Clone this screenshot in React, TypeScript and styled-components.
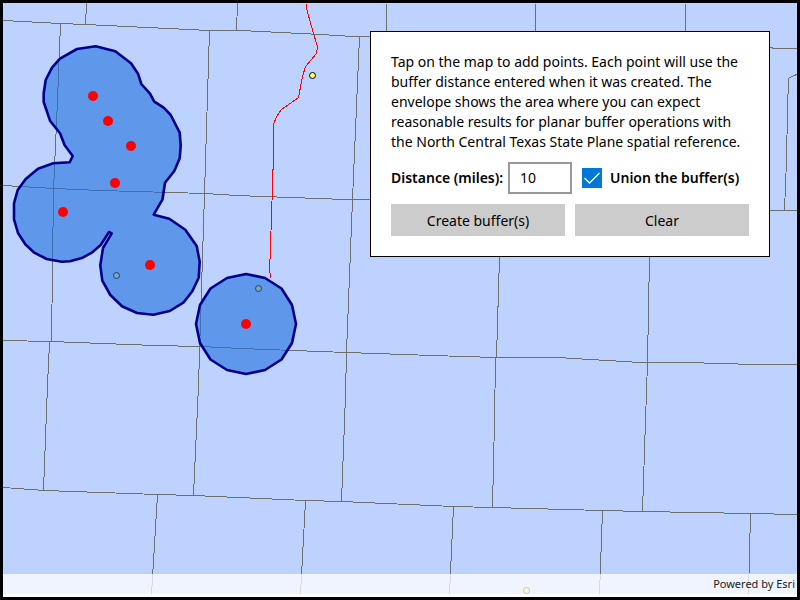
import React, { useState } from "react";
import styled, { createGlobalStyle } from "styled-components";

const GlobalStyle = createGlobalStyle`
  *, *::before, *::after { box-sizing: border-box; }
  body {
    margin: 0;
    font-family: "Noto Sans", "Open Sans", sans-serif;
    font-size: 14px;
    line-height: 20px;
    color: #000;
  }
`;

const Frame = styled.main`
  position: relative;
  display: flex;
  flex-direction: column;
  justify-content: space-between;
  min-height: 100vh;
  border: 3px solid #000;
  background: #bed2ff;
`;

const MapCanvas = styled.svg`
  position: absolute;
  inset: 0;
  width: 100%;
  height: 100%;
`;

const Panel = styled.form`
  position: relative;
  align-self: flex-end;
  display: flex;
  flex-direction: column;
  gap: 10px;
  width: 400px;
  max-width: 100%;
  margin: 28px 27px 28px 0;
  padding: 20px;
  border: 1px solid #000;
  background: #fff;
`;

const Help = styled.p`
  margin: 0;
`;

const Options = styled.div`
  display: flex;
  align-items: center;
  gap: 10px;
`;

const DistanceLabel = styled.label`
  display: flex;
  align-items: center;
  justify-content: space-between;
  width: 181px;
  font-weight: 600;
  white-space: nowrap;
`;

const DistanceInput = styled.input`
  width: 64px;
  height: 32px;
  padding: 0 10px 2px;
  border: 2px solid #999;
  border-radius: 0;
  background: #fff;
  font: inherit;
  font-weight: 400;
  color: #000;
`;

const UnionLabel = styled.label`
  display: flex;
  align-items: center;
  gap: 8px;
  font-weight: 600;
  white-space: nowrap;
`;

const TickBox = styled.span`
  position: relative;
  display: block;
  width: 20px;
  height: 20px;
`;

const Tick = styled.input`
  appearance: none;
  display: block;
  width: 20px;
  height: 20px;
  margin: 0;
  border: 2px solid #333;
  background: #fff;

  &:checked {
    border-color: #0078d7;
    background: #0078d7;
  }
`;

const TickMark = styled.svg`
  position: absolute;
  inset: 0;
  pointer-events: none;
`;

const Actions = styled.div`
  display: grid;
  grid-template-columns: 1fr 1fr;
  gap: 10px;
`;

const Action = styled.button`
  height: 32px;
  padding: 2px 8px 0;
  border: 0;
  background: #ccc;
  font: inherit;
  color: #000;
`;

const Attribution = styled.footer`
  position: relative;
  padding: 0 2px;
  border-bottom: 3px solid #fff;
  background: rgba(255, 255, 255, 0.75);
  background-clip: padding-box;
  font-size: 11px;
  text-align: right;
  color: #222;
`;

const COUNTY_LINES = [
  "3,20 60,23 85,24 209,30 240,30 320,34 352,36 371,36",
  "769,47 775,48 797,48",
  "86,3 85,24",
  "237,3 236,30",
  "386,3 386,32",
  "535,3 535,32",
  "685,3 685,32",
  "797,74 793,75 788,78 787,110 786,160 784,210",
  "60,23 57,100 53,190 51,342",
  "49,342 47,385 43,490",
  "209,30 204,193 200,320 198,385 193,495",
  "359,36 352,199 346,352 345,395 341,501",
  "499,256 496,357 495,358 494,420 492,507",
  "649,256 647,362 645,420 642,511",
  "3,185 54,188 100,190 205,193 236,195 345,199 371,199",
  "769,210 797,210",
  "3,340 50,341 154,345 200,346 240,348 346,352 432,355 495,357 557,357 590,359 640,362 686,362 755,364 797,364",
  "3,487 44,490 157,494 193,495 305,500 341,501 453,506 492,507 602,510 642,511 750,513 797,514",
  "157,494 151,594",
  "305,500 300,594",
  "453,506 449,594",
  "602,510 599,594",
  "750,513 748,594",
];

const ROUTE =
  "306,3 306,8 313,33 317,46 316,53 305,66 302,76 298,97 281,109 276,116 273,124 273,153 272,186 271,215 270,246 269,272 270,273 270,277";

const UNION_BUFFER =
  "95.7,46.3 115.3,51.3 131,63.3 138,73.7 141.3,84 150,93.7 154.3,101.7 163.7,107.7 170.7,115 179.7,132.7 180.7,145.7 179.7,158.3 174.3,171 165,182.7 162.5,199.3 153.7,214.7 169.3,218.7 185.3,229.7 196.7,246 199.7,261.7 198.7,277.7 192.3,291.3 183.7,302.3 169.7,311 153.3,314.7 137,313 122,306.3 110.3,295 102.3,280.7 100.3,265.3 103,248 111.7,233.3 109,232 100.7,245 92.3,252.3 82.7,257.7 70,261.3 61.7,261.7 46.7,259 34.3,252.7 25.3,244.3 18,233 14,219.3 14,203.3 17.7,190 25.7,179 38,168.7 53.3,163.3 69.7,162.3 72.7,156 64.7,145.3 60,133.3 50,120.7 43.7,102 43.7,93.3 45.7,80 52,67.7 60,58.7 77,49";

const SINGLE_BUFFER =
  "246,274 265,278 281.5,288.5 292,305 296,324 292,343 281.5,359.5 265,370 246,374 227,370 210.5,359.5 200,343 196,324 200,305 210.5,288.5 227,278";

const CITIES = [
  [312.5, 75.5],
  [116.5, 275.5],
  [258.5, 288.5],
  [526.5, 590.5],
];

const TAPPED_POINTS = [
  [93, 96],
  [108, 121],
  [131, 146],
  [115, 183],
  [63, 212],
  [150, 265],
  [246, 324],
];

function BufferMap() {
  return (
    <MapCanvas
      viewBox="3 3 794 594"
      preserveAspectRatio="xMidYMid slice"
      role="img"
      aria-label="Map with buffered points"
    >
      <g
        fill="none"
        stroke="#6e6e6e"
        shapeRendering="crispEdges"
        transform="translate(0.5 0.5)"
      >
        {COUNTY_LINES.map((points) => (
          <polyline key={points} points={points} />
        ))}
        <polyline points={ROUTE} stroke="#f00" />
      </g>
      {CITIES.map(([x, y]) => (
        <circle key={x} cx={x} cy={y} r="3" fill="#ffff73" stroke="#000" />
      ))}
      <g
        fill="rgb(32, 112, 220)"
        fillOpacity="0.6"
        stroke="#00008b"
        strokeWidth="2.6"
        strokeLinejoin="round"
      >
        <polygon points={UNION_BUFFER} />
        <polygon points={SINGLE_BUFFER} />
      </g>
      {TAPPED_POINTS.map(([x, y]) => (
        <circle key={x} cx={x} cy={y} r="5" fill="#f00" />
      ))}
    </MapCanvas>
  );
}

export default function App() {
  const [distance, setDistance] = useState("10");
  const [union, setUnion] = useState(true);

  return (
    <>
      <GlobalStyle />
      <Frame>
        <BufferMap />
        <Panel onSubmit={(event) => event.preventDefault()}>
          <Help>
            Tap on the map to add points. Each point will use the buffer
            distance entered when it was created. The envelope shows the area
            where you can expect reasonable results for planar buffer
            operations with the North Central Texas State Plane spatial
            reference.
          </Help>
          <Options>
            <DistanceLabel>
              Distance (miles):
              <DistanceInput
                value={distance}
                onChange={(event) => setDistance(event.target.value)}
              />
            </DistanceLabel>
            <UnionLabel>
              <TickBox>
                <Tick
                  type="checkbox"
                  checked={union}
                  onChange={(event) => setUnion(event.target.checked)}
                />
                {union && (
                  <TickMark viewBox="0 0 20 20" aria-hidden="true">
                    <path
                      d="M2.5 10l5 5L17.5 5"
                      fill="none"
                      stroke="#fff"
                      strokeWidth="1.3"
                    />
                  </TickMark>
                )}
              </TickBox>
              Union the buffer(s)
            </UnionLabel>
          </Options>
          <Actions>
            <Action type="submit">Create buffer(s)</Action>
            <Action type="button">Clear</Action>
          </Actions>
        </Panel>
        <Attribution>Powered by Esri</Attribution>
      </Frame>
    </>
  );
}
